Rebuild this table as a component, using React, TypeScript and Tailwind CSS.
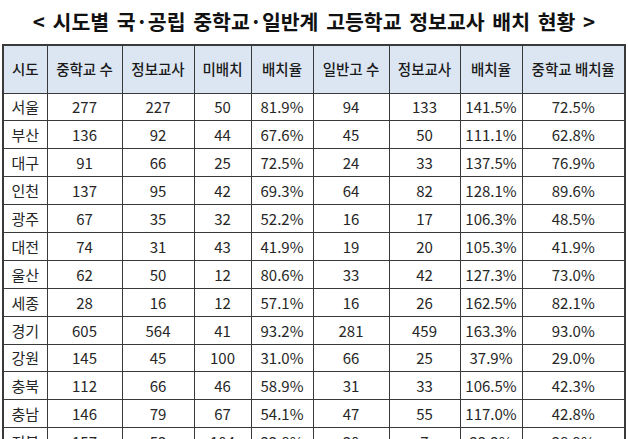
import React from "react";

const rows: string[][] = [
  ["서울", "277", "227", "50", "81.9%", "94", "133", "141.5%", "72.5%"],
  ["부산", "136", "92", "44", "67.6%", "45", "50", "111.1%", "62.8%"],
  ["대구", "91", "66", "25", "72.5%", "24", "33", "137.5%", "76.9%"],
  ["인천", "137", "95", "42", "69.3%", "64", "82", "128.1%", "89.6%"],
  ["광주", "67", "35", "32", "52.2%", "16", "17", "106.3%", "48.5%"],
  ["대전", "74", "31", "43", "41.9%", "19", "20", "105.3%", "41.9%"],
  ["울산", "62", "50", "12", "80.6%", "33", "42", "127.3%", "73.0%"],
  ["세종", "28", "16", "12", "57.1%", "16", "26", "162.5%", "82.1%"],
  ["경기", "605", "564", "41", "93.2%", "281", "459", "163.3%", "93.0%"],
  ["강원", "145", "45", "100", "31.0%", "66", "25", "37.9%", "29.0%"],
  ["충북", "112", "66", "46", "58.9%", "31", "33", "106.5%", "42.3%"],
  ["충남", "146", "79", "67", "54.1%", "47", "55", "117.0%", "42.8%"],
  ["전북", "157", "53", "104", "33.8%", "30", "7", "23.3%", "28.9%"],
];

const headers = ["시도", "중학교 수", "정보교사", "미배치", "배치율", "일반고 수", "정보교사", "배치율", "중학교 배치율"];
const widths = [44, 75, 72, 57, 62, 76, 71, 62, 103];

export default function App() {
  return (
    <div className="w-[628px] h-[439px] overflow-hidden bg-white text-[#222]" style={{ fontFamily: '"Noto Sans CJK KR", "Noto Sans", sans-serif' }}>
      <div className="h-[44px] flex items-center justify-center pb-[2px]">
        <h1 className="text-[20.5px] font-bold [word-spacing:3px] text-[#111] leading-none">
          &lt; 시도별 국·공립 중학교·일반계 고등학교 정보교사 배치 현황 &gt;
        </h1>
      </div>
      <div className="pl-[2px]">
        <table className="table-fixed border-collapse border-2 border-[#3a3a3a] w-[622px]">
          <colgroup>
            {widths.map((w, i) => (
              <col key={i} style={{ width: w }} />
            ))}
          </colgroup>
          <thead>
            <tr className="h-[48px] bg-[#dce6f2]">
              {headers.map((h, i) => (
                <th key={i} className="border border-[#3a3a3a] text-[14.5px] font-medium text-center p-0 whitespace-nowrap text-[#1a1a1a]">
                  {h}
                </th>
              ))}
            </tr>
          </thead>
          <tbody>
            {rows.map((r, ri) => (
              <tr key={ri} className="h-[27.9px]">
                {r.map((c, ci) => (
                  <td key={ci} className="border border-[#3a3a3a] text-[15px] text-center p-0 leading-none whitespace-nowrap text-[#262626]">
                    {c}
                  </td>
                ))}
              </tr>
            ))}
          </tbody>
        </table>
      </div>
    </div>
  );
}
